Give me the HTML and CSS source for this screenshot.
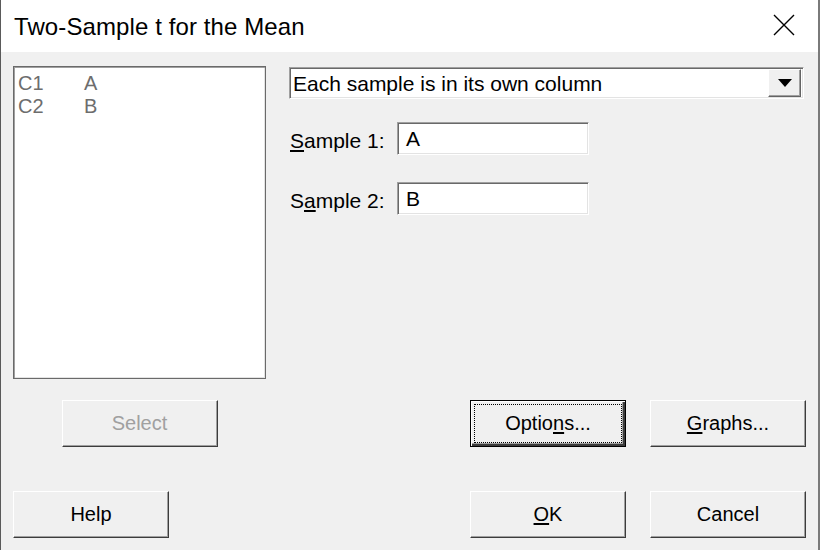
FILE: index.html
```html
<!DOCTYPE html>
<html>
<head>
<meta charset="utf-8">
<link rel="stylesheet" href="styles.css">
</head>
<body>
<div class="window">
  <div class="titlebar">
    <div class="title">Two-Sample t for the Mean</div>
    <svg class="close" width="22" height="22" viewBox="0 0 22 22"><path d="M1 1 L21 21 M21 1 L1 21" stroke="#000" stroke-width="1.4" fill="none"/></svg>
  </div>
  <div class="content">
    <div class="main">
      <div class="listbox">
        <div class="item"><span class="col">C1</span><span>A</span></div>
        <div class="item"><span class="col">C2</span><span>B</span></div>
      </div>
      <div class="right">
        <div class="dropdown">
          <span class="dd-text">Each sample is in its own column</span>
          <span class="dd-btn"><svg width="14" height="8" viewBox="0 0 14 8"><path d="M0 0 H14 L7 8 Z" fill="#000"/></svg></span>
        </div>
        <div class="field">
          <label><u>S</u>ample 1:</label>
          <div class="input">A</div>
        </div>
        <div class="field">
          <label>S<u>a</u>mple 2:</label>
          <div class="input">B</div>
        </div>
      </div>
    </div>
    <div class="row mid">
      <div class="leftcell"><button class="btn disabled">Select</button></div>
      <div class="group">
        <button class="btn focused"><span class="focusrect">Optio<u>n</u>s...</span></button>
        <button class="btn"><u>G</u>raphs...</button>
      </div>
    </div>
    <div class="row bottom">
      <button class="btn">Help</button>
      <div class="group">
        <button class="btn"><u>O</u>K</button>
        <button class="btn">Cancel</button>
      </div>
    </div>
  </div>
</div>
</body>
</html>
```

FILE: styles.css
```css
* { box-sizing: border-box; }
html, body { margin: 0; padding: 0; }
body {
  width: 820px;
  height: 550px;
  overflow: hidden;
  font-family: "Liberation Sans", Arial, sans-serif;
  background: #f0f0f0;
}
.window {
  width: 820px;
  height: 550px;
  border-left: 1px solid #5a5a5a;
  border-right: 2px solid #7a7a7a;
  background: #f0f0f0;
}
.titlebar {
  height: 52px;
  background: #fff;
  display: flex;
  align-items: center;
  justify-content: space-between;
  padding: 0 23px 0 13px;
}
.title {
  font-size: 24px;
  color: #000;
  letter-spacing: 0.1px;
  padding-top: 1px;
}
.close { display: block; margin-top: -2px; }
.content {
  padding: 14px 12px 0 12px;
}
.main {
  display: grid;
  grid-template-columns: 253px 1fr;
  column-gap: 23px;
  height: 313px;
}
.listbox {
  height: 313px;
  background: #fff;
  border: 1px solid #6a6a6a;
  box-shadow: inset 1px 1px #a0a0a0, inset -1px -1px #e3e3e3;
  padding: 4px 4px;
}
.item {
  font-size: 20px;
  color: #6d6d6d;
  height: 23px;
  line-height: 24px;
  display: flex;
}
.col { width: 66px; }
.right {
  display: flex;
  flex-direction: column;
  margin-right: 2px;
  padding-top: 1px;
}
.dropdown {
  height: 32px;
  background: #fff;
  border: 1px solid;
  border-color: #a0a0a0 #fff #fff #a0a0a0;
  box-shadow: inset 1px 1px #696969, inset -1px -1px #e3e3e3;
  display: flex;
  align-items: center;
  justify-content: space-between;
  padding: 2px 2px 2px 3px;
}
.dd-text { font-size: 21px; color: #000; padding-top: 1px; }
.dd-btn {
  width: 33px;
  height: 28px;
  background: #f0f0f0;
  border: 1px solid;
  border-color: #fff #646464 #646464 #fff;
  box-shadow: inset -1px -1px #a0a0a0;
  display: flex;
  align-items: center;
  justify-content: center;
}
.field {
  display: flex;
  align-items: center;
  margin-top: 23px;
}
.field + .field { margin-top: 27px; }
.field label {
  width: 108px;
  font-size: 21px;
  color: #000;
  padding-left: 1px;
  padding-top: 4px;
}
.input {
  width: 192px;
  height: 33px;
  background: #fff;
  border: 1px solid;
  border-color: #a0a0a0 #fff #fff #a0a0a0;
  box-shadow: inset 1px 1px #696969, inset -1px -1px #e3e3e3;
  font-size: 21px;
  color: #000;
  padding: 3px 8px;
  line-height: 25px;
}
.row {
  display: flex;
  align-items: center;
  justify-content: space-between;
}
.mid { margin-top: 21px; }
.bottom { margin-top: 44px; }
.leftcell {
  width: 253px;
  display: flex;
  justify-content: center;
}
.group {
  display: flex;
  gap: 24px;
}
.btn {
  width: 156px;
  height: 47px;
  background: #f0f0f0;
  border: 1px solid;
  border-color: #fff #3c3c3c #3c3c3c #fff;
  box-shadow: inset -1px -1px #a0a0a0;
  font-family: "Liberation Sans", Arial, sans-serif;
  font-size: 20px;
  color: #000;
  padding: 0;
  margin: 0;
  display: flex;
  align-items: center;
  justify-content: center;
}
.btn.disabled { color: #a0a0a0; }
.btn.focused {
  border: 1px solid #000;
  box-shadow: inset 1px 1px #fff, inset -2px -2px #3c3c3c, inset -3px -3px #a0a0a0;
  padding: 3px;
}
.focusrect {
  width: 100%;
  height: 100%;
  border: 1px dotted #000;
  display: flex;
  align-items: center;
  justify-content: center;
}
u { text-decoration: underline; text-underline-offset: 2px; }
```
